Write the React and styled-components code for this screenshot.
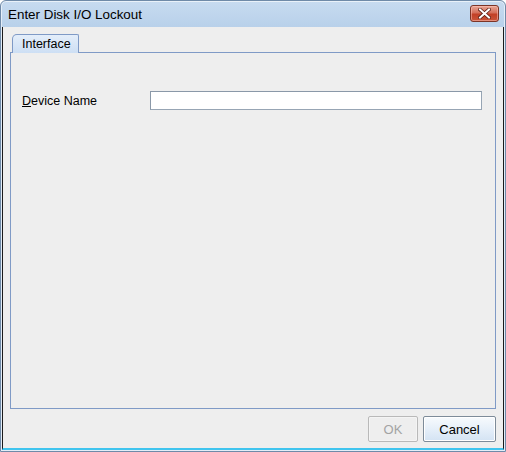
import React from 'react';
import styled, { createGlobalStyle } from 'styled-components';

const GlobalStyle = createGlobalStyle`
  html, body {
    margin: 0;
    padding: 0;
    background: #ffffff;
  }
  body {
    font-family: "Liberation Sans", Arial, sans-serif;
    font-size: 12.5px;
    color: #000;
  }
`;

const Window = styled.div`
  box-sizing: border-box;
  width: 506px;
  height: 452px;
  display: flex;
  flex-direction: column;
  background: linear-gradient(#c7dbf0, #b6cfe9 30px, #bcd3ec);
  border: 1px solid #6f8aa8;
  border-radius: 6px 6px 0 0;
  box-shadow: inset 0 0 0 1px rgba(255, 255, 255, 0.6);
`;

const TitleBar = styled.div`
  height: 26px;
  display: flex;
  align-items: center;
  justify-content: space-between;
  padding: 0 6px 0 7px;
  flex-shrink: 0;
`;

const Title = styled.span`
  font-size: 13.4px;
  color: #000;
`;

const CloseButton = styled.div`
  box-sizing: border-box;
  width: 29px;
  height: 17px;
  margin-top: -2px;
  border: 1px solid #7c3426;
  border-radius: 3px;
  background: linear-gradient(#e8a696, #d46f5a 45%, #c24026 55%, #c9553a);
  box-shadow: inset 0 0 0 1px rgba(255, 200, 190, 0.5);
  display: flex;
  align-items: center;
  justify-content: center;
`;

const Client = styled.div`
  flex: 1;
  display: flex;
  flex-direction: column;
  margin: 0 1px 1px 1px;
  background: #eeeeee;
  border-left: 1px solid #1a1a1a;
  border-right: 1px solid #1a1a1a;
  border-bottom: 2px solid #3fc4ee;
  padding: 7px 7px 6px 7px;
`;

const TabStrip = styled.div`
  display: flex;
  padding-left: 2px;
  height: 18px;
  position: relative;
  z-index: 1;
`;

const Tab = styled.div`
  box-sizing: border-box;
  width: 67px;
  height: 19px;
  padding: 2px 0 0 9px;
  border: 1px solid #7f9ac6;
  border-bottom: none;
  border-radius: 5px 2px 0 0;
  background: linear-gradient(#e4eefa, #cddff4);
  color: #000;
`;

const Pane = styled.div`
  flex: 1;
  border: 1px solid #7f9ac6;
  padding: 38px 13px 0 11px;
`;

const FieldRow = styled.div`
  display: flex;
  align-items: center;
`;

const Label = styled.label`
  width: 128px;
  color: #000;

  u {
    text-decoration: underline;
  }
`;

const TextInput = styled.input`
  box-sizing: border-box;
  flex: 1;
  height: 19px;
  border: 1px solid #97a5b4;
  border-top-color: #8a98a8;
  border-left-color: #8a98a8;
  background: #ffffff;
  outline: none;
  padding: 0 3px;
  font-family: inherit;
  font-size: 12.5px;
`;

const ButtonBar = styled.div`
  display: flex;
  justify-content: flex-end;
  gap: 5px;
  padding-top: 7px;
`;

const Button = styled.button`
  box-sizing: border-box;
  width: ${(p) => p.width}px;
  height: 26px;
  font-family: "Liberation Sans", Arial, sans-serif;
  font-size: 13px;
  border-radius: 2px;
  color: ${(p) => (p.disabled ? '#a3a3a3' : '#000')};
  border: 1px solid ${(p) => (p.disabled ? '#b9b9b9' : '#7d8b99')};
  background: ${(p) =>
    p.disabled ? '#eeeeee' : 'linear-gradient(#f7fafd, #e6eff9 50%, #d4e3f3)'};
  box-shadow: ${(p) =>
    p.disabled ? 'inset 0 0 0 1px #f4f4f4' : 'inset 0 0 0 1px #ffffff'};
  padding: 0;
`;

const App = () => {
  return (
    <>
      <GlobalStyle />
      <Window>
        <TitleBar>
          <Title>Enter Disk I/O Lockout</Title>
          <CloseButton>
            <svg width="13" height="11" viewBox="0 0 13 11">
              <path
                d="M2 1.5 L11 9.5 M11 1.5 L2 9.5"
                stroke="#5a1d12"
                strokeWidth="3.6"
                strokeLinecap="square"
                fill="none"
              />
              <path
                d="M2 1.5 L11 9.5 M11 1.5 L2 9.5"
                stroke="#ffffff"
                strokeWidth="2"
                strokeLinecap="square"
                fill="none"
              />
            </svg>
          </CloseButton>
        </TitleBar>
        <Client>
          <TabStrip>
            <Tab>Interface</Tab>
          </TabStrip>
          <Pane>
            <FieldRow>
              <Label>
                <u>D</u>evice Name
              </Label>
              <TextInput type="text" />
            </FieldRow>
          </Pane>
          <ButtonBar>
            <Button width={50} disabled>
              OK
            </Button>
            <Button width={73}>Cancel</Button>
          </ButtonBar>
        </Client>
      </Window>
    </>
  );
};

export default App;
